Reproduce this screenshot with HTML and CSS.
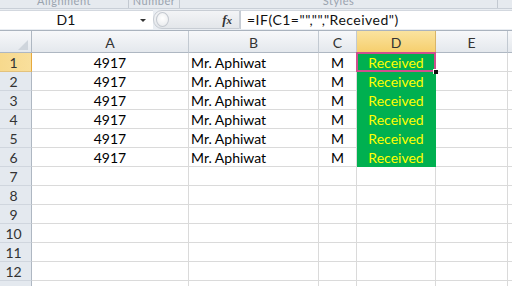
FILE: index.html
```html
<!DOCTYPE html>
<html>
<head>
<meta charset="utf-8">
<link rel="stylesheet" href="styles.css">
</head>
<body>
<div class="app">
  <div class="ribbon">
    <div class="grp g1"><span>Alignment</span></div>
    <div class="grp g2"><span>Number</span></div>
    <div class="grp g3"><span>Styles</span></div>
    <div class="grp g4"></div>
  </div>
  <div class="fbar">
    <div class="namebox"><span class="nb-text">D1</span><span class="nb-arrow"></span></div>
    <div class="fbtns"><span class="knob"></span><span class="fx"><i>f</i><span class="x">x</span></span></div>
    <div class="formula">=IF(C1="","","Received")</div>
  </div>
  <div class="sheet">
    <div class="ch corner"><span class="tri"></span></div>
    <div class="ch">A</div><div class="ch">B</div><div class="ch">C</div><div class="ch sel">D</div><div class="ch">E</div><div class="ch">F</div>

    <div class="rh sel">1</div><div class="c ctr">4917</div><div class="c">Mr. Aphiwat</div><div class="c ctr">M</div><div class="c ctr grn active">Received</div><div class="c"></div><div class="c"></div>
    <div class="rh">2</div><div class="c ctr">4917</div><div class="c">Mr. Aphiwat</div><div class="c ctr">M</div><div class="c ctr grn">Received</div><div class="c"></div><div class="c"></div>
    <div class="rh">3</div><div class="c ctr">4917</div><div class="c">Mr. Aphiwat</div><div class="c ctr">M</div><div class="c ctr grn">Received</div><div class="c"></div><div class="c"></div>
    <div class="rh">4</div><div class="c ctr">4917</div><div class="c">Mr. Aphiwat</div><div class="c ctr">M</div><div class="c ctr grn">Received</div><div class="c"></div><div class="c"></div>
    <div class="rh">5</div><div class="c ctr">4917</div><div class="c">Mr. Aphiwat</div><div class="c ctr">M</div><div class="c ctr grn">Received</div><div class="c"></div><div class="c"></div>
    <div class="rh">6</div><div class="c ctr">4917</div><div class="c">Mr. Aphiwat</div><div class="c ctr">M</div><div class="c ctr grn">Received</div><div class="c"></div><div class="c"></div>
    <div class="rh">7</div><div class="c"></div><div class="c"></div><div class="c"></div><div class="c"></div><div class="c"></div><div class="c"></div>
    <div class="rh">8</div><div class="c"></div><div class="c"></div><div class="c"></div><div class="c"></div><div class="c"></div><div class="c"></div>
    <div class="rh">9</div><div class="c"></div><div class="c"></div><div class="c"></div><div class="c"></div><div class="c"></div><div class="c"></div>
    <div class="rh">10</div><div class="c"></div><div class="c"></div><div class="c"></div><div class="c"></div><div class="c"></div><div class="c"></div>
    <div class="rh">11</div><div class="c"></div><div class="c"></div><div class="c"></div><div class="c"></div><div class="c"></div><div class="c"></div>
    <div class="rh">12</div><div class="c"></div><div class="c"></div><div class="c"></div><div class="c"></div><div class="c"></div><div class="c"></div>
    <div class="rh">13</div><div class="c"></div><div class="c"></div><div class="c"></div><div class="c"></div><div class="c"></div><div class="c"></div>
  </div>
</div>
</body>
</html>
```

FILE: styles.css
```css
html, body {
  margin: 0;
  padding: 0;
  background: #ffffff;
}
body {
  width: 512px;
  height: 286px;
  overflow: hidden;
  font-family: Lato, "Liberation Sans", sans-serif;
}
.app {
  width: 512px;
  height: 286px;
  overflow: hidden;
}

/* ribbon bottom strip */
.ribbon {
  display: flex;
  height: 8px;
  background: #e6eaef;
  border-bottom: 1px solid #c9cfd7;
  overflow: hidden;
}
.grp {
  box-sizing: border-box;
  border-right: 1px solid #c3c9d1;
  text-align: center;
  overflow: hidden;
  font-size: 11px;
  color: #9aa3ae;
  line-height: 12px;
}
.grp span {
  display: block;
  margin-top: -5px;
  letter-spacing: 0.5px;
}
.g1 { width: 129px; }
.g2 { width: 51px; }
.g3 { width: 318px; }
.g4 { flex: 1; border-right: none; }

/* formula bar */
.fbar {
  display: flex;
  height: 21px;
  box-sizing: border-box;
  padding: 1px 0 1px 0;
  background: #e9edf2;
}
.namebox {
  width: 153px;
  display: flex;
  align-items: center;
  background: #ffffff;
  border-top: 1px solid #d3d8df;
  box-sizing: border-box;
}
.nb-text {
  flex: 1;
  text-align: center;
  padding-right: 8px;
  font-size: 14px;
  color: #111;
  line-height: 18px;
}
.nb-arrow {
  width: 0;
  height: 0;
  border-left: 3px solid transparent;
  border-right: 3px solid transparent;
  border-top: 3px solid #333;
  margin-right: 7px;
}
.fbtns {
  width: 87px;
  display: flex;
  align-items: center;
  justify-content: space-between;
  background: linear-gradient(#f3f4f6, #e3e6ea);
  border: 1px solid #c8cdd4;
  border-radius: 9px 0 0 9px;
  box-sizing: border-box;
  padding: 0 7px 0 2px;
}
.knob {
  width: 11px;
  height: 13px;
  border-radius: 50%;
  background: radial-gradient(circle at 50% 40%, #ffffff, #e6e8eb);
  border: 1px solid #c4c9d0;
}
.fx {
  font-family: "Liberation Serif", serif;
  font-size: 13px;
  color: #333;
  font-weight: bold;
  line-height: 16px;
}
.fx i { font-style: italic; }
.fx .x { font-style: italic; font-size: 11px; }
.formula {
  flex: 1;
  background: #ffffff;
  border-left: 1px solid #c6ccd4;
  border-top: 1px solid #d3d8df;
  box-sizing: border-box;
  padding-left: 6px;
  font-size: 14px;
  line-height: 18px;
  letter-spacing: 0.5px;
  color: #111;
  white-space: nowrap;
}

/* sheet grid */
.sheet {
  display: grid;
  grid-template-columns: 32px 157px 130px 38px 79px 72px 30px;
  grid-auto-rows: 19px;
  grid-template-rows: 22px;
  border-top: 1px solid #aab3be;
  font-size: 14px;
}
.ch {
  box-sizing: border-box;
  border-right: 1px solid #c2c9d1;
  border-bottom: 1px solid #aeb7c2;
  background: linear-gradient(#f7f8fa, #e4e8ed);
  text-align: center;
  color: #333;
  padding-top: 2px;
  line-height: 20px;
}
.ch.sel {
  background: linear-gradient(#fae39f, #f6cf6e);
  border-bottom: 1px solid #e6a93e;
  border-right-color: #d9b567;
}
.corner {
  position: relative;
  border-right: 1px solid #aeb7c2;
}
.tri {
  position: absolute;
  right: 3px;
  bottom: 2px;
  width: 0;
  height: 0;
  border-left: 10px solid transparent;
  border-bottom: 10px solid #cfd5dc;
}
.rh {
  box-sizing: border-box;
  border-right: 1px solid #aeb7c2;
  border-bottom: 1px solid #d0d6de;
  background: #e4e9ef;
  text-align: center;
  padding-right: 4px;
  color: #333;
  line-height: 20px;
}
.rh.sel {
  background: linear-gradient(90deg, #f7d98d, #f9df9c);
  border-right-color: #e6a93e;
  border-bottom-color: #e3c27d;
}
.c {
  box-sizing: border-box;
  border-right: 1px solid #dadada;
  border-bottom: 1px solid #dadada;
  padding-left: 2px;
  line-height: 20px;
  color: #000;
  white-space: nowrap;
  overflow: visible;
}
.ctr {
  text-align: center;
  padding-left: 0;
}
.grn {
  background: #00b050;
  border-color: #00b050;
  color: #ffff00;
}
.active {
  position: relative;
}
.active::after {
  content: "";
  position: absolute;
  left: -1px;
  top: -1px;
  right: -1px;
  bottom: -1px;
  border: 2px solid #cf4f8e;
}
.active::before {
  content: "";
  position: absolute;
  right: -3px;
  bottom: -3px;
  width: 4px;
  height: 4px;
  background: #111;
  border-left: 1px solid #fff;
  border-top: 1px solid #fff;
  z-index: 2;
}
```
